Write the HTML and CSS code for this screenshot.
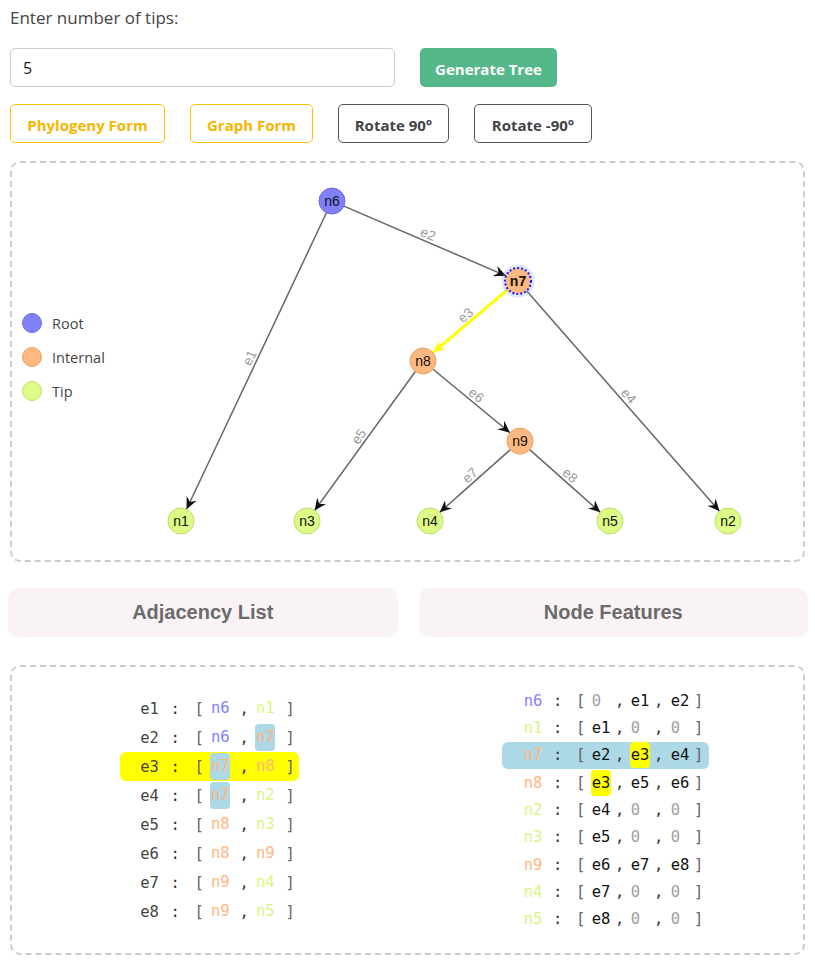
FILE: index.html
```html
<!DOCTYPE html>
<html>
<head>
<meta charset="utf-8">
<title>Phylogeny</title>
<link rel="stylesheet" href="styles.css">
</head>
<body>
<div class="page">
  <label class="tips-label" for="tips">Enter number of tips:</label>
  <div class="input-row">
    <input id="tips" class="tips-input" type="text" value="5">
    <button class="btn btn-green">Generate Tree</button>
  </div>
  <div class="btn-row">
    <button class="btn btn-yellow w-phylo">Phylogeny Form</button>
    <button class="btn btn-yellow w-graph">Graph Form</button>
    <button class="btn btn-dark w-rot">Rotate 90°</button>
    <button class="btn btn-dark w-rotn">Rotate -90°</button>
  </div>

  <div class="graph-panel">
    <svg viewBox="12 163 791 397" preserveAspectRatio="none" xmlns="http://www.w3.org/2000/svg">
      <defs>
        <marker id="arr" viewBox="-12 -6 13 12" refX="0" refY="0" markerWidth="13" markerHeight="12" markerUnits="userSpaceOnUse" orient="auto">
          <path d="M0,0 L-12,-5.5 L-8,0 L-12,5.5 Z" fill="#111"/>
        </marker>
        <marker id="arr-y" viewBox="-12 -6 13 12" refX="0" refY="0" markerWidth="13" markerHeight="12" markerUnits="userSpaceOnUse" orient="auto">
          <path d="M0,0 L-12,-5.5 L-8,0 L-12,5.5 Z" fill="#ffff00"/>
        </marker>
      </defs>

      <g class="legend">
        <circle class="c-root" cx="32" cy="323" r="9.5"/>
        <text class="legend-text" x="52" y="329">Root</text>
        <circle class="c-int" cx="32" cy="357" r="9.5"/>
        <text class="legend-text" x="52" y="363">Internal</text>
        <circle class="c-tip" cx="32" cy="391" r="9.5"/>
        <text class="legend-text" x="52" y="397">Tip</text>
      </g>

      <g class="edges">
        <line class="edge" x1="326.45" y1="212.76" x2="186.55" y2="509.24" marker-end="url(#arr)"/>
        <line class="edge" x1="343.94" y1="206.14" x2="506.06" y2="275.86" marker-end="url(#arr)"/>
        <line class="edge edge-sel" x1="508.06" y1="289.37" x2="432.94" y2="352.63" marker-end="url(#arr-y)"/>
        <line class="edge" x1="526.56" y1="290.78" x2="719.44" y2="511.22" marker-end="url(#arr)"/>
        <line class="edge" x1="415.37" y1="371.53" x2="314.63" y2="510.47" marker-end="url(#arr)"/>
        <line class="edge" x1="433.03" y1="369.27" x2="509.97" y2="432.73" marker-end="url(#arr)"/>
        <line class="edge" x1="510.28" y1="449.64" x2="439.72" y2="512.36" marker-end="url(#arr)"/>
        <line class="edge" x1="529.72" y1="449.64" x2="600.28" y2="512.36" marker-end="url(#arr)"/>
      </g>

      <g class="edge-labels">
        <text class="elabel" transform="translate(256.5 361) rotate(-64.73)" y="-3">e1</text>
        <text class="elabel" transform="translate(425 241) rotate(23.27)" y="-3">e2</text>
        <text class="elabel" transform="translate(470.5 321) rotate(-40.1)" y="-3">e3</text>
        <text class="elabel" transform="translate(623 401) rotate(48.81)" y="-3">e4</text>
        <text class="elabel" transform="translate(365 441) rotate(-54.06)" y="-3">e5</text>
        <text class="elabel" transform="translate(471.5 401) rotate(39.5)" y="-3">e6</text>
        <text class="elabel" transform="translate(475 481) rotate(-41.63)" y="-3">e7</text>
        <text class="elabel" transform="translate(565 481) rotate(41.63)" y="-3">e8</text>
      </g>

      <g class="nodes">
        <circle class="c-root" cx="332" cy="201" r="13"/>
        <text class="nlabel" x="332" y="206">n6</text>

        <circle class="halo" cx="518" cy="281" r="15"/>
        <circle class="c-int c-sel" cx="518" cy="281" r="13"/>
        <text class="nlabel nlabel-sel" x="518" y="286">n7</text>

        <circle class="c-int" cx="423" cy="361" r="13"/>
        <text class="nlabel" x="423" y="366">n8</text>

        <circle class="c-int" cx="520" cy="441" r="13"/>
        <text class="nlabel" x="520" y="446">n9</text>

        <circle class="c-tip" cx="181" cy="521" r="13"/>
        <text class="nlabel" x="181" y="526">n1</text>
        <circle class="c-tip" cx="307" cy="521" r="13"/>
        <text class="nlabel" x="307" y="526">n3</text>
        <circle class="c-tip" cx="430" cy="521" r="13"/>
        <text class="nlabel" x="430" y="526">n4</text>
        <circle class="c-tip" cx="610" cy="521" r="13"/>
        <text class="nlabel" x="610" y="526">n5</text>
        <circle class="c-tip" cx="728" cy="521" r="13"/>
        <text class="nlabel" x="728" y="526">n2</text>
      </g>
    </svg>
  </div>

  <div class="headers">
    <div class="header">Adjacency List</div>
    <div class="header">Node Features</div>
  </div>

  <div class="data-panel">
    <div class="list adj">
      <div class="row"><span class="k">e1</span><span class="p colon">:</span><span class="p lb">[</span><span class="v root">n6</span><span class="p comma">,</span><span class="v tip">n1</span><span class="p rb">]</span></div>
      <div class="row"><span class="k">e2</span><span class="p colon">:</span><span class="p lb">[</span><span class="v root">n6</span><span class="p comma">,</span><span class="v int hl-blue">n7</span><span class="p rb">]</span></div>
      <div class="row row-yellow"><span class="k">e3</span><span class="p colon">:</span><span class="p lb">[</span><span class="v int hl-blue">n7</span><span class="p comma">,</span><span class="v int">n8</span><span class="p rb">]</span></div>
      <div class="row"><span class="k">e4</span><span class="p colon">:</span><span class="p lb">[</span><span class="v int hl-blue">n7</span><span class="p comma">,</span><span class="v tip">n2</span><span class="p rb">]</span></div>
      <div class="row"><span class="k">e5</span><span class="p colon">:</span><span class="p lb">[</span><span class="v int">n8</span><span class="p comma">,</span><span class="v tip">n3</span><span class="p rb">]</span></div>
      <div class="row"><span class="k">e6</span><span class="p colon">:</span><span class="p lb">[</span><span class="v int">n8</span><span class="p comma">,</span><span class="v int">n9</span><span class="p rb">]</span></div>
      <div class="row"><span class="k">e7</span><span class="p colon">:</span><span class="p lb">[</span><span class="v int">n9</span><span class="p comma">,</span><span class="v tip">n4</span><span class="p rb">]</span></div>
      <div class="row"><span class="k">e8</span><span class="p colon">:</span><span class="p lb">[</span><span class="v int">n9</span><span class="p comma">,</span><span class="v tip">n5</span><span class="p rb">]</span></div>
    </div>

    <div class="list nf">
      <div class="row"><span class="k root">n6</span><span class="p colon">:</span><span class="p lb">[</span><span class="v zero">0</span><span class="p comma">,</span><span class="v">e1</span><span class="p comma">,</span><span class="v v3">e2</span><span class="p rb">]</span></div>
      <div class="row"><span class="k tip">n1</span><span class="p colon">:</span><span class="p lb">[</span><span class="v">e1</span><span class="p comma">,</span><span class="v zero">0</span><span class="p comma">,</span><span class="v v3 zero">0</span><span class="p rb">]</span></div>
      <div class="row row-blue"><span class="k int">n7</span><span class="p colon">:</span><span class="p lb">[</span><span class="v">e2</span><span class="p comma">,</span><span class="v hl-yellow">e3</span><span class="p comma">,</span><span class="v v3">e4</span><span class="p rb">]</span></div>
      <div class="row"><span class="k int">n8</span><span class="p colon">:</span><span class="p lb">[</span><span class="v hl-yellow">e3</span><span class="p comma">,</span><span class="v">e5</span><span class="p comma">,</span><span class="v v3">e6</span><span class="p rb">]</span></div>
      <div class="row"><span class="k tip">n2</span><span class="p colon">:</span><span class="p lb">[</span><span class="v">e4</span><span class="p comma">,</span><span class="v zero">0</span><span class="p comma">,</span><span class="v v3 zero">0</span><span class="p rb">]</span></div>
      <div class="row"><span class="k tip">n3</span><span class="p colon">:</span><span class="p lb">[</span><span class="v">e5</span><span class="p comma">,</span><span class="v zero">0</span><span class="p comma">,</span><span class="v v3 zero">0</span><span class="p rb">]</span></div>
      <div class="row"><span class="k int">n9</span><span class="p colon">:</span><span class="p lb">[</span><span class="v">e6</span><span class="p comma">,</span><span class="v">e7</span><span class="p comma">,</span><span class="v v3">e8</span><span class="p rb">]</span></div>
      <div class="row"><span class="k tip">n4</span><span class="p colon">:</span><span class="p lb">[</span><span class="v">e7</span><span class="p comma">,</span><span class="v zero">0</span><span class="p comma">,</span><span class="v v3 zero">0</span><span class="p rb">]</span></div>
      <div class="row"><span class="k tip">n5</span><span class="p colon">:</span><span class="p lb">[</span><span class="v">e8</span><span class="p comma">,</span><span class="v zero">0</span><span class="p comma">,</span><span class="v v3 zero">0</span><span class="p rb">]</span></div>
    </div>
  </div>
</div>
</body>
</html>
```

FILE: styles.css
```css
* {
  box-sizing: border-box;
}

body {
  margin: 0;
  font-family: "Open Sans", "Noto Sans", sans-serif;
  color: #444;
  background: #fff;
}

.page {
  padding: 0 10px;
}

.tips-label {
  display: block;
  padding-top: 6px;
  font-size: 17px;
  line-height: 24px;
  color: #444;
}

.input-row {
  display: flex;
  gap: 25px;
  margin-top: 18px;
}

.tips-input {
  width: 385px;
  height: 39px;
  border: 1px solid #ccc;
  border-radius: 5px;
  padding: 0 12px;
  font: 16px "Open Sans", sans-serif;
  color: #222;
  outline: none;
}

.btn {
  height: 39px;
  border-radius: 5px;
  font: bold 15px "Open Sans", sans-serif;
  background: #fff;
  padding: 2px 0 0;
  cursor: pointer;
}

.btn-green {
  width: 137px;
  background: #55b88a;
  border: none;
  color: #fff;
}

.btn-row {
  display: flex;
  gap: 25px;
  margin-top: 17px;
}

.btn-yellow {
  border: 1px solid #ffc107;
  color: #f7b500;
}

.btn-dark {
  border: 1px solid #555;
  color: #444;
}

.w-phylo { width: 155px; }
.w-graph { width: 123px; }
.w-rot { width: 111px; }
.w-rotn { width: 118px; }

.graph-panel {
  margin-top: 18px;
  height: 401px;
  border: 2px dashed #ccc;
  border-radius: 10px;
}

.graph-panel svg {
  display: block;
  width: 100%;
  height: 100%;
}

.c-root { fill: #8080fb; stroke: #6c6ce4; stroke-width: 1; }
.c-int { fill: #ffb87f; stroke: #e6a264; stroke-width: 1; }
.c-tip { fill: #ddfb86; stroke: #bfdc6a; stroke-width: 1; }
.c-sel { stroke: #1a1aff; stroke-width: 2; stroke-dasharray: 2 2; }
.halo { fill: none; stroke: rgba(120, 160, 255, 0.25); stroke-width: 3; }

.legend-text {
  font: 14.5px "Open Sans", sans-serif;
  fill: #444;
}

.edge {
  stroke: #666;
  stroke-width: 1.5;
}

.edge-sel {
  stroke: #ffff00;
  stroke-width: 3;
}

.elabel {
  font: 13.5px "Liberation Sans", Arial, sans-serif;
  fill: #999;
  text-anchor: middle;
}

.nlabel {
  font: 14px "Liberation Sans", Arial, sans-serif;
  fill: #111;
  text-anchor: middle;
}

.nlabel-sel {
  font-weight: bold;
}

.headers {
  display: grid;
  grid-template-columns: 1fr 1fr;
  gap: 21px;
  margin: 26px -3px 0 -2px;
}

.header {
  height: 49px;
  background: #faf3f5;
  border-radius: 10px;
  display: flex;
  align-items: center;
  justify-content: center;
  font: bold 20px "Liberation Sans", Arial, sans-serif;
  color: #6b6b6b;
}

.data-panel {
  margin-top: 28px;
  height: 290px;
  border: 2px dashed #ccc;
  border-radius: 10px;
  display: grid;
  grid-template-columns: 1fr 1fr;
  align-items: center;
  justify-items: center;
}

.list {
  display: flex;
  flex-direction: column;
}

.row {
  display: flex;
  align-items: center;
  font: 15.5px "DejaVu Sans Mono", "Liberation Mono", monospace;
  color: #333;
  border-radius: 6px;
}

.k {
  width: 20px;
  flex: none;
}

.p {
  width: 10px;
  flex: none;
  text-align: center;
}

.lb, .rb {
  color: #666;
}

.v {
  width: 20px;
  flex: none;
  border-radius: 4px;
}

.root { color: #8080ff; }
.int { color: #ffb680; }
.tip { color: #d6f77f; }
.zero { color: #a0a0a0; }

.hl-blue { background: #add8e6; }
.hl-yellow { background: #ffff00; }
.row-yellow { background: #ffff00; }
.row-blue { background: #add8e6; }

/* adjacency list */
.adj .row {
  height: 29px;
  padding: 0 4px 0 20px;
}
.adj .k { color: #444; }
.adj .colon { margin-left: 10px; }
.adj .lb { margin-left: 14px; }
.adj .v {
  margin-left: 6px;
  height: 27px;
  line-height: 27px;
  text-align: center;
}
.adj .comma { margin-left: 9px; }
.adj .rb { margin-left: 10px; }

/* node features */
.nf .row {
  height: 27.33px;
  padding: 0 5px 0 22px;
}
.nf .colon { margin-left: 9px; }
.nf .lb { margin-left: 13px; }
.nf .v {
  margin-left: 5px;
  height: 26px;
  line-height: 26px;
  padding-left: 1px;
  color: #111;
}
.nf .v.zero { color: #a0a0a0; }
.nf .v3 { margin-left: 6px; }
.nf .comma { margin-left: 4px; }
.nf .rb { margin-left: 4px; }
```
